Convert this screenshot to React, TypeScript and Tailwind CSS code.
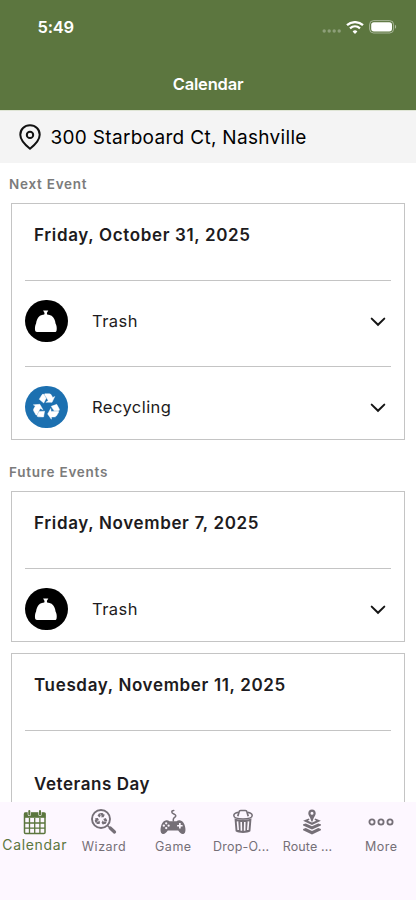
import type { ReactNode } from "react";

type Service = "trash" | "recycling";

interface CalendarEvent {
  date: string;
  services?: Service[];
  holiday?: string;
}

const NEXT_EVENT: CalendarEvent = {
  date: "Friday, October 31, 2025",
  services: ["trash", "recycling"],
};

const FUTURE_EVENTS: CalendarEvent[] = [
  { date: "Friday, November 7, 2025", services: ["trash"] },
  { date: "Tuesday, November 11, 2025", holiday: "Veterans Day" },
];

function StatusBar() {
  return (
    <div className="flex h-[54px] items-center justify-between pr-[19px] pl-[37.5px] text-white">
      <span className="text-[16.5px] leading-none font-semibold tracking-[-0.2px]">5:49</span>
      <div className="flex items-center">
        <svg width="20" height="6" viewBox="0 0 20 6" className="mt-[7px] mr-[4px]" fill="#fff" fillOpacity=".3">
          <circle cx="2.2" cy="3" r="1.7" />
          <circle cx="7.2" cy="3" r="1.7" />
          <circle cx="12.2" cy="3" r="1.7" />
          <circle cx="17.2" cy="3" r="1.7" />
        </svg>
        <svg width="18" height="13" viewBox="0 0 18 13" className="mr-[5px]" fill="none" stroke="#fff">
          <path d="M1 4.2C5.5.1 12.5.1 17 4.2" strokeWidth="2.3" />
          <path d="M4 7.4c2.9-2.6 7.1-2.6 10 0" strokeWidth="2.2" />
          <path d="M9 12.9 6.6 10.4a3.6 3.6 0 0 1 4.8 0Z" fill="#fff" stroke="none" />
        </svg>
        <svg width="28" height="14" viewBox="0 0 28 14">
          <rect x=".6" y=".6" width="24" height="12.4" rx="4" fill="none" stroke="#fff" strokeOpacity=".45" />
          <rect x="2.2" y="2.2" width="20.8" height="9.2" rx="2.6" fill="#fff" />
          <path d="M26 4.8c1.5.6 1.5 3.4 0 4Z" fill="#fff" fillOpacity=".5" />
        </svg>
      </div>
    </div>
  );
}

// One folded arrow, repeated three times around the origin
function RecycleArrows() {
  return (
    <>
      {[0, 120, 240].map((angle) => (
        <g key={angle} transform={`rotate(${angle})`}>
          <path d="M-21-22-13-35Q-10-39-7-35L-1-25-8-11Z" />
          <path d="M-5-38H8Q12-38 14-34L18-27 24-30 16-13H-2L5-18-6-36Z" />
        </g>
      ))}
    </>
  );
}

function TrashBag() {
  return (
    <svg className="size-full" viewBox="0 0 43 43" fill="#fff">
      <path d="M18.3 10.6c1 .4 1.9-.2 2.8 0 1 .2 1.7 0 2.5 0l-1.5 2.6.3 1.4c3.6.4 6 1.7 7.2 4.5.7 1.6 1.2 3 1.3 4.6 1.1 1.8 1.5 4.5 1.1 6.8-.2 1.3-.8 1.9-1.9 1.9H12.1c-1.1 0-1.7-.5-1.9-1.7-.3-2.3 0-5.1 1-7 .1-1.6.6-3.1 1.3-4.6 1.2-2.7 3.5-4.1 7-4.5l.3-1.4Z" />
    </svg>
  );
}

function ServiceRow({ service }: { service: Service }) {
  const isTrash = service === "trash";
  return (
    <div className="flex h-[86px] items-start border-t border-[#c4c4c4] pt-[18.5px]">
      <div
        className={`flex size-[42.5px] shrink-0 items-center justify-center rounded-full ${
          isTrash ? "bg-black" : "bg-[#1c70b0]"
        }`}
      >
        {isTrash ? (
          <TrashBag />
        ) : (
          <svg width="27" height="27" viewBox="-39 -40 78 78" fill="#fff" stroke="#fff" strokeWidth="1.2">
            <RecycleArrows />
          </svg>
        )}
      </div>
      <span className="ml-[24.5px] flex-1 text-[16.5px] leading-[43px] tracking-[0.45px] text-[#1d1b20]">
        {isTrash ? "Trash" : "Recycling"}
      </span>
      <svg width="16" height="10" viewBox="0 0 16 10" className="mt-[17px] mr-[5px]">
        <path d="m1.7 1.6 6.3 6.2 6.3-6.2" fill="none" stroke="#151515" strokeWidth="2" strokeLinecap="round" />
      </svg>
    </div>
  );
}

function EventCard({ event }: { event: CalendarEvent }) {
  return (
    <div className="mx-[11px] border border-[#c4c4c4] bg-white px-[13px]">
      <h2 className="h-[76px] pt-[19px] pl-[9px] text-[17px] leading-6 font-semibold tracking-[0.65px] text-[#1d1b20]">
        {event.date}
      </h2>
      {event.services && (
        <div className="-mb-[13px]">
          {event.services.map((service) => (
            <ServiceRow key={service} service={service} />
          ))}
        </div>
      )}
      {event.holiday && (
        <div className="h-[120px] border-t border-[#c4c4c4] pt-[41px] pl-[9px] text-[17px] leading-6 font-semibold tracking-[0.55px] text-[#1d1b20]">
          {event.holiday}
        </div>
      )}
    </div>
  );
}

function SectionLabel({ children }: { children: ReactNode }) {
  return (
    <h3 className="pl-[9px] text-[13.5px] leading-5 font-semibold tracking-[0.75px] text-[#7b7b7b]">{children}</h3>
  );
}

function CalendarIcon() {
  return (
    <svg width="24" height="26" viewBox="0 0 24 26" fill="none" stroke="currentColor">
      <rect x="1.5" y="4" width="20.5" height="20.5" rx="1" strokeWidth="1.5" />
      <path d="M1 3.8h21.500v5H1Z" fill="currentColor" stroke="none" />
      <path d="M1 14h21M1 19.2h21M6.500 9v15M11.700 9v15M16.900 9v15" strokeWidth="1.3" />
      <path d="M6.300 2.500v3M17 2.500v3" stroke="#fdf7ff" strokeWidth="3.2" strokeLinecap="round" />
      <path d="M6.300 2v3.600M17 2v3.600" strokeWidth="2" strokeLinecap="round" />
    </svg>
  );
}

function WizardIcon() {
  return (
    <svg width="28" height="28" viewBox="0 0 28 28" fill="none" stroke="currentColor">
      <circle cx="11" cy="11" r="9" strokeWidth="1.9" />
      <path d="m17.5 17.5 2.5 2.5" strokeWidth="1.5" />
      <path d="m20.2 20 4.3 4" strokeWidth="3.3" strokeLinecap="round" />
      <g transform="translate(11 11.3) scale(.165)" fill="currentColor" stroke="none">
        <RecycleArrows />
      </g>
    </svg>
  );
}

function GameIcon() {
  return (
    <svg width="26" height="26" viewBox="0 0 26 26" fill="currentColor">
      <path
        d="M13.3 12v-1.500c0-2.200 2.500-1.800 2.500-3.700 0-1.900-4-1.700-4-3.800 0-1 .9-1.500 2-1.500"
        fill="none"
        stroke="currentColor"
        strokeWidth="1.5"
        strokeLinecap="round"
      />
      <path d="M5.500 11.500c1.600-.4 3-.1 3.900.7h7.200c.9-.8 2.300-1.100 3.900-.7 2.600.6 3.900 3.200 4.600 6.300.7 3.200.5 6-1.200 6.900-2 1-3.700-.4-5.700-3.100H7.800c-2 2.700-3.700 4.100-5.700 3.100-1.700-.9-1.900-3.700-1.200-6.900.7-3.100 2-5.700 4.600-6.300Z" />
      <g fill="#fdf7ff">
        <circle cx="6.2" cy="14.3" r="1.15" />
        <circle cx="6.2" cy="19.1" r="1.15" />
        <circle cx="3.8" cy="16.7" r="1.15" />
        <circle cx="8.6" cy="16.7" r="1.15" />
        <path d="M19 14h1.700v1.900h1.900v1.700h-1.900v1.900H19v-1.900h-1.900v-1.700H19Z" />
      </g>
    </svg>
  );
}

function DropOffIcon() {
  return (
    <svg width="22" height="25" viewBox="0 0 22 25" fill="none" stroke="currentColor">
      <path
        d="M6.5 3.2C3.500 3.700 1.800 5 1.800 6.500c0 2.100 4.100 3.400 9.200 3.400s9.200-1.300 9.200-3.400c0-1.500-1.700-2.800-4.700-3.300"
        strokeWidth="1.5"
      />
      <path d="M5.8 7.200 7 3c.2-.9.700-1.500 1.700-1.500h4.600c1 0 1.500.6 1.700 1.500l1.200 4.200" strokeWidth="1.7" />
      <path d="M2.500 9.200c4.500 2 12.500 2 17 0l-1.100 13c-2.600 2.300-12.200 2.300-14.800 0Z" fill="currentColor" stroke="none" />
      <path d="m5.500 12.400.7 8.600M9.200 13.100l.2 8.700M12.800 13.100l-.2 8.700M16.500 12.400l-.7 8.600" stroke="#fdf7ff" strokeWidth="1.6" />
    </svg>
  );
}

function RouteIcon() {
  return (
    <svg width="20" height="26" viewBox="0 0 20 26" fill="currentColor">
      <path
        fillRule="evenodd"
        d="M10 .5c2.300 0 3.700 1.600 3.700 3.700 0 2.500-2.400 4.300-3.100 8.300H9.400C8.700 8.500 6.300 6.700 6.300 4.200 6.300 2.100 7.700.5 10 .5Zm0 2.200a1.500 1.500 0 1 0 0 3 1.500 1.500 0 0 0 0-3Z"
      />
      <path d="m6.800 9.400-5.700 2.300 8.900 4.200 8.900-4.200-5.700-2.300-.7 1.400 1.700.9-4.200 1.700-4.200-1.700 1.700-.9Z" />
      <path d="m1.100 15.300 2.700-.9 6.200 2.900 6.200-2.900 2.700.9v1.200L10 20.600l-8.900-4.100ZM1.100 20.100l2.700-1 6.200 2.800 6.200-2.800 2.700 1v1.200L10 25.500l-8.900-4.200Z" />
    </svg>
  );
}

function MoreIcon() {
  return (
    <svg width="26" height="26" viewBox="0 0 26 26" fill="none" stroke="currentColor" strokeWidth="1.8">
      <circle cx="4" cy="13" r="2.6" />
      <circle cx="13" cy="13" r="2.6" />
      <circle cx="22" cy="13" r="2.6" />
    </svg>
  );
}

const TABS = [
  { label: "Calendar", icon: <CalendarIcon />, labelClass: "-mt-px text-[14px] tracking-[0.65px]" },
  { label: "Wizard", icon: <WizardIcon />, labelClass: "mt-[1.5px] text-[12.5px] tracking-[0.5px]" },
  { label: "Game", icon: <GameIcon />, labelClass: "mt-[1.5px] text-[12.5px] tracking-[0.5px]" },
  { label: "Drop-O...", icon: <DropOffIcon />, labelClass: "mt-[1.5px] pr-[3px] text-[12.5px] tracking-[0.25px]" },
  { label: "Route ...", icon: <RouteIcon />, labelClass: "mt-[1.5px] pr-[9px] text-[12.5px] tracking-[0.15px]" },
  { label: "More", icon: <MoreIcon />, labelClass: "mt-[1.5px] text-[12.5px] tracking-[0.5px]" },
];

function TabBar() {
  return (
    <nav className="grid h-[98.5px] shrink-0 grid-cols-6 bg-[#fdf7ff]">
      {TABS.map((tab, i) => (
        <div
          key={tab.label}
          className={`flex flex-col items-center whitespace-nowrap pt-[6px] ${
            i === 0 ? "text-[#5b763e]" : "text-[#756f77]"
          }`}
        >
          <div className="flex h-[28px] items-center">{tab.icon}</div>
          <span className={`leading-5 ${tab.labelClass}`}>{tab.label}</span>
        </div>
      ))}
    </nav>
  );
}

export default function App() {
  return (
    <div className="flex h-[900px] w-[416px] flex-col overflow-hidden bg-white font-['Inter',sans-serif]">
      <header className="h-[110px] shrink-0 bg-[#5c763f]">
        <StatusBar />
        <h1 className="pt-[19px] text-center text-[16.5px] leading-[22px] font-semibold tracking-[-0.2px] text-white">
          Calendar
        </h1>
      </header>

      <div className="flex h-[53px] shrink-0 items-center border-t border-[#dfe5d5] bg-[#f4f4f4] pl-[19px]">
        <svg width="22" height="26" viewBox="0 0 22 26" fill="none" stroke="#111" strokeWidth="2">
          <path
            d="M11 1.200c5.600 0 9.700 4.200 9.700 9.500 0 5.500-4.300 9.700-9.700 14-5.400-4.300-9.700-8.500-9.700-14 0-5.300 4.100-9.500 9.700-9.500Z"
            strokeLinejoin="round"
          />
          <circle cx="11" cy="10.9" r="3.2" />
        </svg>
        <span className="mt-[2px] ml-[9.5px] text-[19px] tracking-[0.31px] text-black">
          300 Starboard Ct, Nashville
        </span>
      </div>

      <main className="min-h-0 flex-1 overflow-hidden pt-[11px]">
        <SectionLabel>Next Event</SectionLabel>
        <div className="mt-[9px]">
          <EventCard event={NEXT_EVENT} />
        </div>
        <div className="mt-[22px]">
          <SectionLabel>Future Events</SectionLabel>
        </div>
        <div className="mt-[9px] flex flex-col gap-[11px]">
          {FUTURE_EVENTS.map((event) => (
            <EventCard key={event.date} event={event} />
          ))}
        </div>
      </main>

      <TabBar />
    </div>
  );
}
